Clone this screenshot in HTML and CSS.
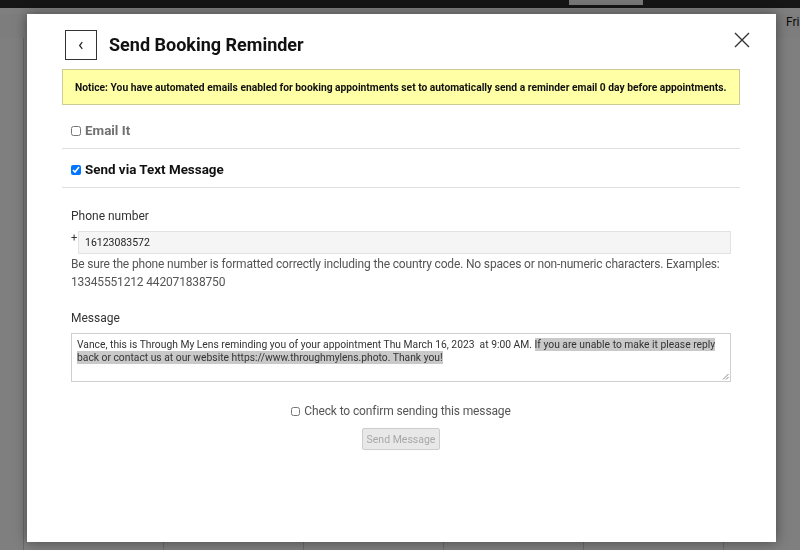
FILE: index.html
```html
<!DOCTYPE html>
<html lang="en">
<head>
<meta charset="utf-8">
<title>Send Booking Reminder</title>
<link rel="stylesheet" href="styles.css">
</head>
<body>
<div class="page">
  <div class="topbar"><span class="topbar-tab"></span></div>
  <div class="calendar">
    <div class="cal-row cal-head">
      <div class="cal-gutter"></div>
      <div class="cal-col">Sun</div>
      <div class="cal-col">Mon</div>
      <div class="cal-col">Tue</div>
      <div class="cal-col">Wed</div>
      <div class="cal-col">Thu</div>
      <div class="cal-col">Fri</div>
    </div>
    <div class="cal-row cal-body">
      <div class="cal-gutter"></div>
      <div class="cal-col"></div>
      <div class="cal-col"></div>
      <div class="cal-col"></div>
      <div class="cal-col"></div>
      <div class="cal-col"></div>
      <div class="cal-col"></div>
    </div>
  </div>
</div>
<div class="backdrop"></div>
<div class="modal">
  <div class="modal-header">
    <button class="back-btn" type="button" aria-label="Back">
      <svg width="6" height="9" viewBox="0 0 6 9"><polyline points="4.3,1.2 1.6,4.5 4.3,7.8" fill="none" stroke="#222" stroke-width="1.2"/></svg>
    </button>
    <h2 class="title">Send Booking Reminder</h2>
    <button class="close-btn" type="button" aria-label="Close">
      <svg width="16" height="16" viewBox="0 0 16 16"><path d="M1 1 L15 15 M15 1 L1 15" stroke="#333" stroke-width="1.4" fill="none"/></svg>
    </button>
  </div>
  <div class="notice">Notice: You have automated emails enabled for booking appointments set to automatically send a reminder email 0 day before appointments.</div>
  <label class="option option-first option-muted"><input type="checkbox" class="cb"> Email It</label>
  <label class="option"><input type="checkbox" class="cb" checked> Send via Text Message</label>
  <div class="form">
    <div class="field-label">Phone number</div>
    <div class="phone-row">
      <span class="plus">+</span>
      <div class="phone-input">16123083572</div>
    </div>
    <p class="help">Be sure the phone number is formatted correctly including the country code. No spaces or non-numeric characters. Examples:<br>13345551212 442071838750</p>
    <div class="field-label msg-label">Message</div>
    <div class="textarea">Vance, this is Through My Lens reminding you of your appointment Thu March 16, 2023&nbsp; at 9:00 AM. <span class="sel">If you are unable to make it please reply<br>back or contact us at our website https://www.throughmylens.photo. Thank you!</span>
      <svg class="grip" width="7" height="7" viewBox="0 0 7 7"><path d="M6.5 1 L1 6.5 M6.5 4 L4 6.5" stroke="#777" stroke-width="0.9"/></svg>
    </div>
    <label class="confirm"><input type="checkbox" class="cb cb-small"> Check to confirm sending this message</label>
    <div class="actions"><button class="send-btn" type="button" disabled>Send Message</button></div>
  </div>
</div>
</body>
</html>
```

FILE: styles.css
```css
* { box-sizing: border-box; }
html, body {
  margin: 0;
  padding: 0;
  width: 800px;
  height: 550px;
  overflow: hidden;
  font-family: Roboto, "Liberation Sans", Arial, sans-serif;
  background: #fff;
}
.page {
  width: 800px;
  height: 550px;
  display: flex;
  flex-direction: column;
}
.topbar {
  height: 8px;
  background: #2c2c2c;
  position: relative;
  flex: none;
}
.topbar-tab {
  position: absolute;
  left: 569px;
  top: 0;
  width: 74px;
  height: 5px;
  background: #eeeeee;
}
.calendar {
  flex: 1;
  display: flex;
  flex-direction: column;
  background: #fff;
}
.cal-row {
  display: grid;
  grid-template-columns: 23px repeat(6, 140px);
}
.cal-head {
  height: 24px;
  margin-top: 6px;
  background: #fafafa;
}
.cal-head .cal-col {
  font-size: 12px;
  line-height: 16px;
  color: #111;
  padding: 0 0 0 63px;
  white-space: nowrap;
  border-left: 0;
}
.cal-body { flex: 1; }
.cal-col { border-left: 1px solid #d4d4d4; }
.backdrop {
  position: fixed;
  inset: 0;
  background: rgba(0, 0, 0, 0.5);
}
.modal {
  position: absolute;
  left: 27px;
  top: 14px;
  width: 749px;
  height: 528px;
  background: #fff;
  box-shadow: 0 0 12px rgba(0, 0, 0, 0.45);
  padding: 16px 36px 0 35px;
}
.modal-header {
  display: flex;
  align-items: center;
  height: 30px;
}
.back-btn {
  width: 32px;
  height: 30px;
  margin-left: 3px;
  border: 1px solid #333;
  background: #fff;
  padding: 0;
  display: flex;
  align-items: center;
  justify-content: center;
  flex: none;
}
.title {
  margin: 0 0 0 12px;
  font-size: 18px;
  font-weight: 700;
  line-height: 22px;
  color: #111;
}
.close-btn {
  margin-left: auto;
  margin-right: -10px;
  margin-top: -11px;
  width: 16px;
  height: 16px;
  padding: 0;
  border: 0;
  background: none;
  display: flex;
  flex: none;
}
.notice {
  margin-top: 9px;
  height: 36px;
  background: #ffffa6;
  border: 1px solid #cfcb94;
  padding: 0 12px;
  font-size: 10.28px;
  font-weight: 700;
  color: #111;
  display: flex;
  align-items: center;
  white-space: nowrap;
}
.option {
  display: flex;
  align-items: center;
  gap: 4px;
  padding: 12px 9px 8px;
  line-height: 18px;
  font-size: 13.4px;
  font-weight: 700;
  color: #111;
  border-bottom: 1px solid #e0e0e0;
}
.option-first { margin-top: 5px; }
.option-muted { color: #707070; }
.cb {
  width: 10px;
  height: 10px;
  margin: 0;
  flex: none;
}
.cb-small { width: 9px; height: 9px; }
.form {
  padding: 19px 9px 0;
}
.field-label {
  font-size: 12px;
  line-height: 18px;
  color: #333;
}
.msg-label { margin-top: 18px; }
.phone-row {
  display: flex;
  margin-top: 6px;
}
.plus {
  width: 7px;
  font-size: 11px;
  line-height: 14px;
  color: #333;
  flex: none;
}
.phone-input {
  flex: 1;
  height: 23px;
  background: #f5f5f5;
  border: 1px solid #e2e2e2;
  padding-left: 6px;
  font-size: 10.5px;
  line-height: 21px;
  color: #222;
}
.help {
  margin: 1px 0 0;
  font-size: 12px;
  letter-spacing: -0.16px;
  line-height: 18px;
  color: #555;
}
.textarea {
  position: relative;
  margin-top: 6px;
  height: 49px;
  border: 1px solid #cfcfcf;
  padding: 4px 5px;
  font-size: 10.3px;
  line-height: 13px;
  color: #333;
  white-space: nowrap;
}
.sel { background: #c9c9c9; }
.grip {
  position: absolute;
  right: 1px;
  bottom: 1px;
}
.confirm {
  display: flex;
  justify-content: center;
  align-items: center;
  gap: 4px;
  margin-top: 20px;
  font-size: 12px;
  letter-spacing: -0.12px;
  line-height: 18px;
  color: #555;
}
.actions {
  display: flex;
  justify-content: center;
  margin-top: 8px;
}
.send-btn {
  width: 78px;
  height: 22px;
  padding: 0;
  background: #e8e8e8;
  border: 1px solid #cdcdcd;
  border-radius: 2px;
  font-family: inherit;
  font-size: 10.5px;
  color: #a8a8a8;
}
```
